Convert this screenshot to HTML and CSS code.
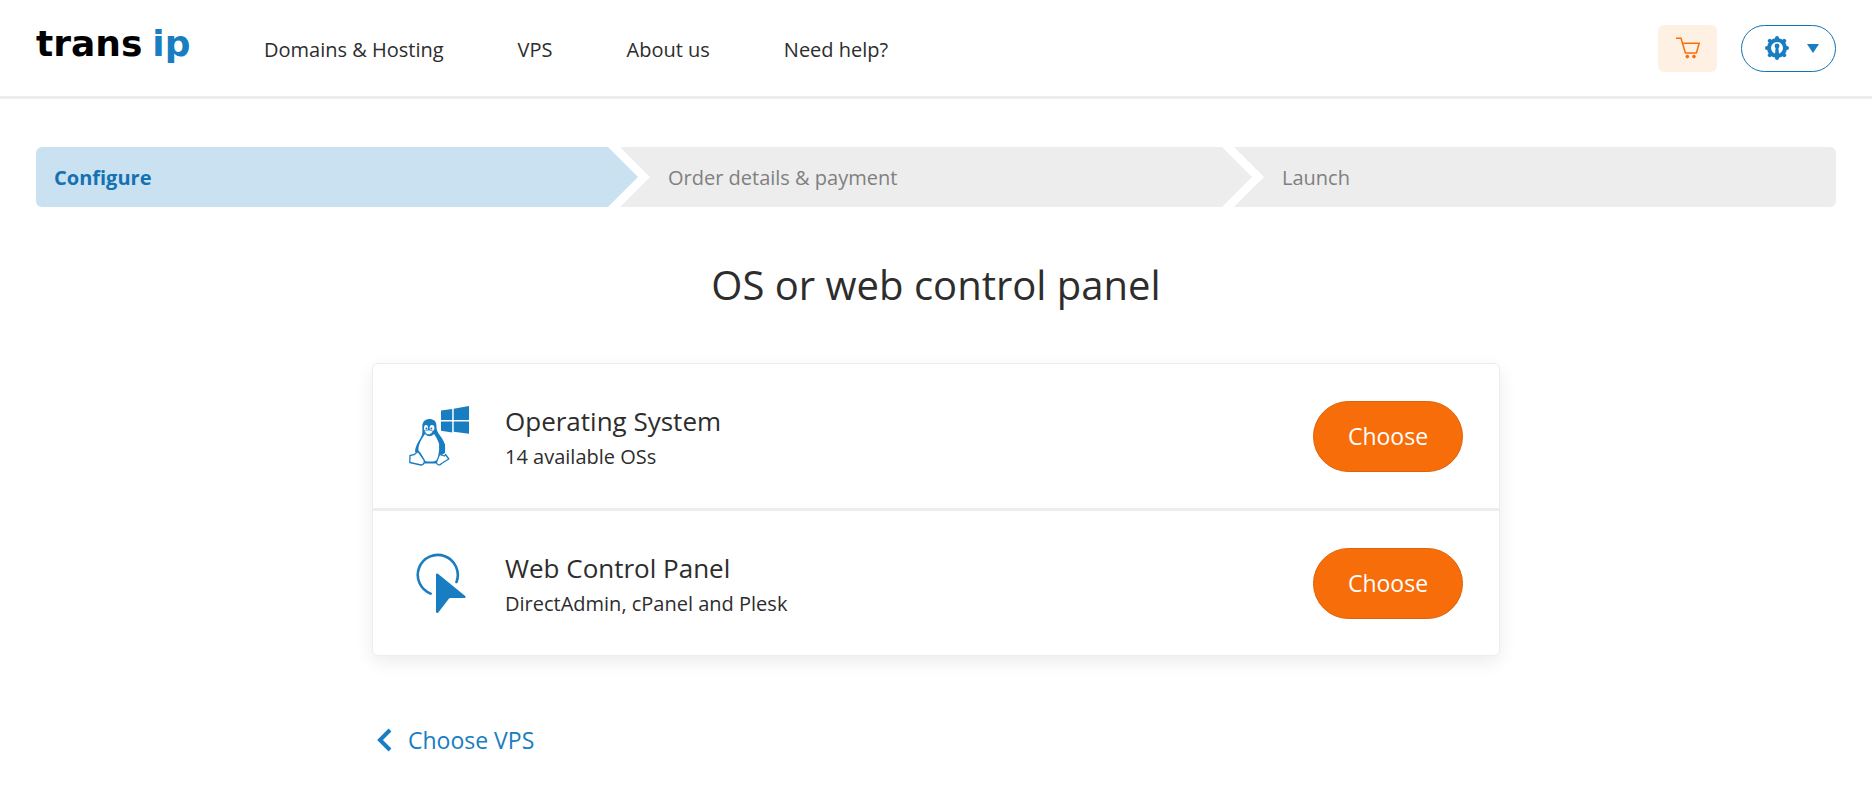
FILE: index.html
```html
<!DOCTYPE html>
<html lang="en">

<head>
  <meta charset="UTF-8">
  <meta name="viewport" content="width=device-width, initial-scale=1.0">

  <title>TransIP - OS or web control panel</title>

  <link rel="stylesheet" href="styles.css">
</head>

<body>
  <header class="header">
    <a href="#" class="logo">trans<span class="logo__ip">ip</span></a>

    <nav class="nav">
      <a href="#" class="nav__link">Domains &amp; Hosting</a>
      <a href="#" class="nav__link">VPS</a>
      <a href="#" class="nav__link">About us</a>
      <a href="#" class="nav__link">Need help?</a>
    </nav>

    <div class="actions">
      <a href="#" class="cart" aria-label="Shopping cart">
        <svg width="24" height="22" viewBox="0 0 24 22" fill="none" stroke="currentColor" stroke-width="1.5">
          <path d="M0 1.3h5l4.4 14.6h11L23.2 6.2H6.6" />
          <circle cx="11.3" cy="19.6" r="1.8" fill="currentColor" stroke="none" />
          <circle cx="18" cy="19.6" r="1.8" fill="currentColor" stroke="none" />
        </svg>
      </a>

      <button type="button" class="account" aria-label="Account">
        <svg width="24" height="24" viewBox="0 0 24 24" fill="currentColor">
          <circle cx="12" cy="12" r="8" fill="none" stroke="currentColor" stroke-width="4" />
          <g stroke="currentColor" stroke-width="4" stroke-linecap="round">
            <path d="M12 2v1M12 21v1M2 12h1M21 12h1M4.800 4.800l.8.8M18.400 18.400l.8.8M4.800 19.200l.8-.8M18.400 5.600l.8-.8" />
          </g>
          <circle cx="12" cy="10" r="2.400" />
          <path d="M10.700 11h2.600l.8 8H9.900z" />
        </svg>
        <svg width="12" height="9" viewBox="0 0 12 9" fill="currentColor">
          <path d="M0 0h12L6 9z" />
        </svg>
      </button>
    </div>
  </header>

  <main class="main">
    <ol class="steps">
      <li class="step step--active">Configure</li>
      <li class="step">Order details &amp; payment</li>
      <li class="step">Launch</li>
    </ol>

    <section class="content">
      <h1 class="title">OS or web control panel</h1>

      <ul class="options">
        <li class="option">
          <svg class="option__icon" width="60" height="60" viewBox="0 0 60 60" fill="#187dc1">
            <path d="M32 4.500l11.200-1.600v11.200H32zM44.700 2.700L60 0v14.100H44.700zM32 15.600h11.200v10.800L32 24.800zM44.700 15.600H60v12.100l-15.300-2z" />
            <path d="M20.500 13c-5.400 0-7.500 4-7.200 8.500.3 5.500.2 7.500-2.300 11.500-2.600 4.200-4.800 8-5 12.500L9 50l5 7.500h13L32 48l4-3c1-6-1.500-11-5-15.500-3-4-3.500-6-3.600-10.500-.1-3.800-2.900-6-6.900-6z" />
            <path fill="#fff" d="M16 28c-3.500 5-7 11-6.500 16.500 3 3 5.500 8 6.500 10.500 5 1 9 1 13-1.500.5-4 .5-8 1.500-11 .5-5-2.700-10.500-5.500-14.500-3 3-6 3-9 0z" />
            <ellipse cx="17" cy="22" rx="2" ry="2.900" fill="#fff" />
            <ellipse cx="23" cy="22" rx="2.400" ry="2.900" fill="#fff" />
            <circle cx="17.400" cy="22.600" r="1" />
            <circle cx="22.400" cy="22.600" r="1" />
            <path fill="#fff" stroke="#187dc1" stroke-width=".8" d="M15.500 25.500c2-2 6.500-2 8.500 0-2 3.800-6.500 4.500-8.500 0z" />
            <path d="M30 40c1-3 4-4 6-2v9l-5 3z" />
            <path fill="#fff" stroke="#187dc1" stroke-width="1.300" stroke-linejoin="round" d="M1 49.500l4-.8L9 45.500l6 8.500c1 2.500-.5 5-3 5L.8 56.500zM30.500 48.500l5 1.500 1-1.500 3.300 4.500-7.300 4.500c-2 2.500-5 1.500-5-1.500z" />
          </svg>

          <div class="option__info">
            <h2 class="option__name">Operating System</h2>
            <p class="option__text">14 available OSs</p>
          </div>

          <button type="button" class="option__choose">Choose</button>
        </li>

        <li class="option">
          <svg class="option__icon" width="60" height="60" viewBox="0 0 60 60" fill="#187dc1">
            <path d="M21.600 40.600A20 20 0 1 1 47.500 29" fill="none" stroke="#187dc1" stroke-width="2.600" stroke-linecap="round" />
            <path d="M27 21.500c0-1 1-1.400 1.900-.8l27 22c1.300 1.100.9 2.400-.7 2.400H42.500c-1.500 0-2.500.4-3.400 1.600L29.500 59.200c-.9 1.200-2.500.8-2.500-.8z" />
          </svg>

          <div class="option__info">
            <h2 class="option__name">Web Control Panel</h2>
            <p class="option__text">DirectAdmin, cPanel and Plesk</p>
          </div>

          <button type="button" class="option__choose">Choose</button>
        </li>
      </ul>

      <a href="#" class="back">
        <svg width="16" height="24" viewBox="0 0 16 24" fill="none" stroke="currentColor" stroke-width="4">
          <path d="M14 2L4 12l10 10" />
        </svg>
        Choose VPS
      </a>
    </section>
  </main>
</body>

</html>
```
FILE: styles.css
```css
* {
  box-sizing: border-box;
}

body {
  margin: 0;

  background-color: #fff;
  color: #2d2d2d;

  font-family: 'Open Sans', 'Noto Sans', sans-serif;
  font-size: 20px;
  line-height: 30px;
}

a {
  color: inherit;
  text-decoration: none;
}

ul,
ol {
  list-style-type: none;
  padding: 0;
  margin: 0;
}

button {
  cursor: pointer;
  font-family: inherit;
}

svg {
  display: block;
  flex: none;
}

.header {
  display: flex;
  align-items: center;

  min-height: 99px;
  padding: 0 36px;
  border-bottom: 3px solid #ededed;
}

.logo {
  width: 192px;
  padding-bottom: 8px;

  color: #000;
  font-family: 'DejaVu Sans', sans-serif;
  font-size: 36px;
  font-weight: bold;
  line-height: 48px;
}

.logo__ip {
  margin-left: 10px;
  color: #187dc1;
}

.nav {
  display: flex;
  gap: 74px;
  padding: 4px 36px 0;
}

.actions {
  display: flex;
  gap: 24px;
  margin-left: auto;
}

.cart {
  display: flex;
  align-items: center;
  justify-content: center;

  width: 59px;
  height: 47px;
  border-radius: 6px;

  background-color: #fef0e2;
  color: #f76d09;
}

.account {
  display: flex;
  align-items: center;
  justify-content: center;
  gap: 18px;

  width: 95px;
  height: 47px;
  padding: 0 0 0 6px;
  border: 1px solid #1471b2;
  border-radius: 24px;

  background-color: #fff;
  color: #187dc1;
}

.main {
  padding: 48px 36px 24px;
}

.steps {
  display: flex;
  overflow: hidden;
  border-radius: 6px;
}

/* arrow shaped steps, each one slides into the previous */
.step {
  box-sizing: content-box;
  flex: 1 1 0;
  padding: 16px 30px 14px 48px;
  margin-left: -18px;

  background-color: #ededed;
  color: #808080;
  clip-path: polygon(0 0, calc(100% - 30px) 0, 100% 50%, calc(100% - 30px) 100%, 0 100%, 30px 50%);
}

.step:first-child {
  padding-left: 18px;
  margin-left: 0;
  clip-path: polygon(0 0, calc(100% - 30px) 0, 100% 50%, calc(100% - 30px) 100%, 0 100%);
}

.step:last-child {
  padding-right: 0;
  clip-path: polygon(0 0, 100% 0, 100% 100%, 0 100%, 30px 50%);
}

.step--active {
  background-color: #cae1f1;
  color: #1471b2;
  font-weight: bold;
}

.content {
  max-width: 1128px;
  margin: 0 auto;
}

.title {
  margin: 48px 0;

  text-align: center;
  font-size: 40px;
  font-weight: normal;
  line-height: 60px;
}

.options {
  border: 1px solid #ededed;
  border-radius: 6px;
  box-shadow: 0 6px 18px rgba(0, 0, 0, 0.08);
}

.option {
  display: flex;
  align-items: center;

  padding: 36px;
}

.option + .option {
  border-top: 3px solid #ededed;
}

.option__info {
  flex: 1;
  padding: 0 36px;
}

.option__name {
  margin: 0;

  font-size: 26px;
  font-weight: normal;
  line-height: 42px;
}

.option__text {
  margin: 0;
}

.option__choose {
  width: 150px;
  height: 71px;
  border: 1px solid #de6208;
  border-radius: 36px;

  background-color: #f76d09;
  color: #fff;
  font-size: 23px;
}

.back {
  display: inline-flex;
  align-items: center;
  gap: 16px;

  margin-top: 66px;
  padding-left: 4px;

  color: #187dc1;
  font-size: 23px;
  line-height: 36px;
}
```
